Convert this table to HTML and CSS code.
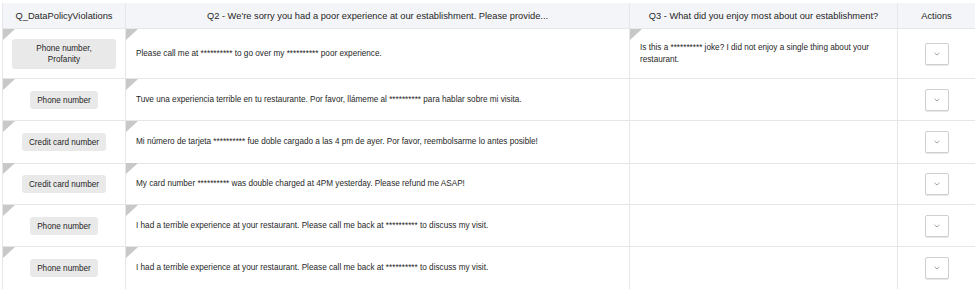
FILE: index.html
```html
<!DOCTYPE html>
<html>
<head>
<meta charset="utf-8">
<link rel="stylesheet" href="styles.css">
</head>
<body>
<div class="page">
  <div class="grid">
    <div class="hcell first">Q_DataPolicyViolations</div>
    <div class="hcell">Q2 - We're sorry you had a poor experience at our establishment. Please provide...</div>
    <div class="hcell">Q3 - What did you enjoy most about our establishment?</div>
    <div class="hcell last">Actions</div>

    <div class="cell first tall flag center"><span class="pill wide">Phone number,<br>Profanity</span></div>
    <div class="cell tall flag text">Please call me at ********** to go over my ********** poor experience.</div>
    <div class="cell tall flag text">Is this a ********** joke? I did not enjoy a single thing about your restaurant.</div>
    <div class="cell tall last center"><button class="act"><svg width="6" height="4" viewBox="0 0 6 4"><polyline points="0.5,0.8 3,3 5.5,0.8" fill="none" stroke="#9a9a9a" stroke-width="0.9"/></svg></button></div>

    <div class="cell first flag center"><span class="pill">Phone number</span></div>
    <div class="cell flag text">Tuve una experiencia terrible en tu restaurante. Por favor, llámeme al ********** para hablar sobre mi visita.</div>
    <div class="cell text"></div>
    <div class="cell last center"><button class="act"><svg width="6" height="4" viewBox="0 0 6 4"><polyline points="0.5,0.8 3,3 5.5,0.8" fill="none" stroke="#9a9a9a" stroke-width="0.9"/></svg></button></div>

    <div class="cell first flag center r43"><span class="pill">Credit card number</span></div>
    <div class="cell flag text r43">Mi número de tarjeta ********** fue doble cargado a las 4 pm de ayer. Por favor, reembolsarme lo antes posible!</div>
    <div class="cell text r43"></div>
    <div class="cell last center r43"><button class="act"><svg width="6" height="4" viewBox="0 0 6 4"><polyline points="0.5,0.8 3,3 5.5,0.8" fill="none" stroke="#9a9a9a" stroke-width="0.9"/></svg></button></div>

    <div class="cell first flag center"><span class="pill">Credit card number</span></div>
    <div class="cell flag text">My card number ********** was double charged at 4PM yesterday. Please refund me ASAP!</div>
    <div class="cell text"></div>
    <div class="cell last center"><button class="act"><svg width="6" height="4" viewBox="0 0 6 4"><polyline points="0.5,0.8 3,3 5.5,0.8" fill="none" stroke="#9a9a9a" stroke-width="0.9"/></svg></button></div>

    <div class="cell first flag center"><span class="pill">Phone number</span></div>
    <div class="cell flag text">I had a terrible experience at your restaurant. Please call me back at ********** to discuss my visit.</div>
    <div class="cell text"></div>
    <div class="cell last center"><button class="act"><svg width="6" height="4" viewBox="0 0 6 4"><polyline points="0.5,0.8 3,3 5.5,0.8" fill="none" stroke="#9a9a9a" stroke-width="0.9"/></svg></button></div>

    <div class="cell first flag center nob"><span class="pill">Phone number</span></div>
    <div class="cell flag text nob">I had a terrible experience at your restaurant. Please call me back at ********** to discuss my visit.</div>
    <div class="cell text nob"></div>
    <div class="cell last center nob"><button class="act"><svg width="6" height="4" viewBox="0 0 6 4"><polyline points="0.5,0.8 3,3 5.5,0.8" fill="none" stroke="#9a9a9a" stroke-width="0.9"/></svg></button></div>
  </div>
</div>
</body>
</html>
```
FILE: styles.css
```css
* { box-sizing: border-box; }
html, body { margin: 0; background: #fff; }
body {
  font-family: "Liberation Sans", Arial, sans-serif;
  color: #1f1f1f;
}
.page { padding: 3px 0 0 2px; }
.grid {
  display: grid;
  grid-template-columns: 124px 504px 268px 1fr;
  grid-auto-rows: 42px;
  grid-template-rows: 26px 50px;
}
.hcell {
  background: #f4f5f8;
  border-right: 1px solid #e6e7ea;
  border-bottom: 1px solid #e6e7ea;
  font-size: 9.3px;
  display: flex;
  align-items: center;
  justify-content: center;
  color: #1f1f1f;
  white-space: nowrap;
}
.hcell.first { border-left: 1px solid #e6e7ea; }
.hcell.last { border-right: none; }
.cell {
  position: relative;
  border-right: 1px solid #e6e6e6;
  border-bottom: 1px solid #e6e6e6;
  display: flex;
  align-items: center;
  font-size: 8.2px;
  line-height: 12px;
}
.cell.first { border-left: 1px solid #e6e6e6; }
.cell.last { border-right: none; }
.cell.r43 { height: 43px; }
.cell.nob { border-bottom: none; }
.center { justify-content: center; }
.text { padding: 0 14px 0 10px; }
.flag::before {
  content: "";
  position: absolute;
  left: 0;
  top: 0;
  border-top: 11px solid #c8c8c8;
  border-right: 12px solid transparent;
}
.pill {
  background: #e9e9e9;
  border-radius: 3px;
  font-size: 8.2px;
  line-height: 11px;
  padding: 4px 7px 3px;
  text-align: center;
  color: #1f1f1f;
  min-width: 67px;
}
.pill.wide { width: 104px; padding: 4px 6px; }
.act {
  width: 24px;
  height: 22px;
  border: 1px solid #cfcfcf;
  border-radius: 2px;
  background: #fff;
  padding: 0;
  display: flex;
  align-items: center;
  justify-content: center;
  box-shadow: 0 1px 0 #e8e8e8;
}
```
